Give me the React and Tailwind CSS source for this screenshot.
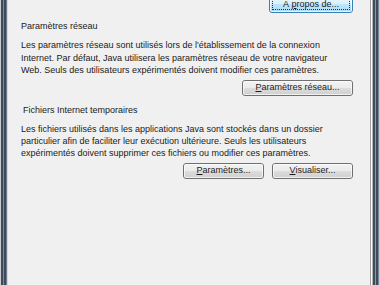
import React from "react";

const font = { fontFamily: '"Liberation Sans", Arial, sans-serif' };

function Btn({ children, className = "", blue = false }) {
  return (
    <div
      className={
        "relative flex items-center justify-center rounded-[3px] border text-[9px] text-[#1b1b1b] " +
        (blue
          ? "border-[#3c7fb1] bg-[linear-gradient(#eaf6fd_0%,#d9f0fc_50%,#bee6fd_50%,#a7d9f5_100%)] "
          : "border-[#707070] bg-[linear-gradient(#f2f2f2_0%,#ebebeb_50%,#dddddd_50%,#cfcfcf_100%)] ") +
        className
      }
    >
      <div className="pointer-events-none absolute inset-0 rounded-[2px] border border-white/70" />
      {blue && (
        <div className="pointer-events-none absolute inset-[2px] border border-dotted border-[#333]" />
      )}
      <span className="relative">{children}</span>
    </div>
  );
}

export default function App() {
  return (
    <div
      className="flex h-[285px] w-[380px] overflow-hidden bg-[#f0f0f0] text-[#1a1a1a]"
      style={font}
    >
      {/* left frame */}
      <div className="flex h-full shrink-0">
        <div className="w-px bg-[#c9ccd1]" />
        <div className="w-[2px] bg-[#3e4b5b]" />
        <div className="w-px bg-[#7a8799]" />
        <div className="w-[2px] bg-[#3e4b5b]" />
        <div className="w-px bg-[#6f7c8d]" />
        <div className="w-px bg-[#d6d6d6]" />
      </div>

      {/* content */}
      <div className="flex w-[362px] shrink-0 flex-col pl-[13px] pr-[17px]">
        <div className="flex justify-end">
          <Btn blue className="-mt-[4px] h-[17px] w-[84px]">
            À <span className="underline">p</span>ropos de...
          </Btn>
        </div>

        <div className="mt-[7px] text-[9px] leading-[12px]">Paramètres réseau</div>

        <div className="mt-[7px] text-[9px] leading-[12.5px]">
          Les paramètres réseau sont utilisés lors de l'établissement de la connexion
          <br />
          Internet. Par défaut, Java utilisera les paramètres réseau de votre navigateur
          <br />
          Web. Seuls des utilisateurs expérimentés doivent modifier ces paramètres.
        </div>

        <div className="mt-[3px] flex justify-end">
          <Btn className="h-[16px] w-[111px]">
            <span className="underline">P</span>aramètres réseau...
          </Btn>
        </div>

        <div className="mt-[8px] pl-[2px] text-[9px] leading-[12px]">
          Fichiers Internet temporaires
        </div>

        <div className="mt-[7px] text-[9px] leading-[12px]">
          Les fichiers utilisés dans les applications Java sont stockés dans un dossier
          <br />
          particulier afin de faciliter leur exécution ultérieure. Seuls les utilisateurs
          <br />
          expérimentés doivent supprimer ces fichiers ou modifier ces paramètres.
        </div>

        <div className="mt-[4px] flex justify-end gap-[8px]">
          <Btn className="h-[16px] w-[81px]">
            <span className="underline">P</span>aramètres...
          </Btn>
          <Btn className="h-[16px] w-[81px]">
            <span className="underline">V</span>isualiser...
          </Btn>
        </div>
      </div>

      {/* right frame */}
      <div className="flex h-full shrink-0">
        <div className="w-px bg-[#a0a0a0]" />
        <div className="w-px bg-[#ffffff]" />
        <div className="w-px bg-[#b4b4b4]" />
        <div className="w-[2px] bg-[#3e4b5b]" />
        <div className="w-px bg-[#8a98a8]" />
        <div className="w-[2px] bg-[#3e4b5b]" />
        <div className="w-px bg-[#7a8799]" />
        <div className="w-px bg-[#c9ccd1]" />
      </div>
    </div>
  );
}
